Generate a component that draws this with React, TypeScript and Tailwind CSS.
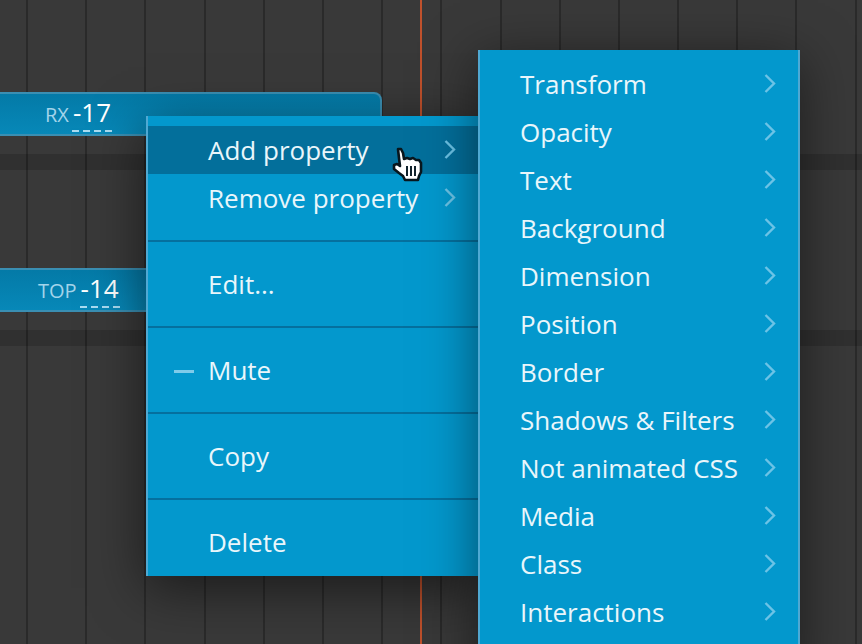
const GRID_COLUMNS = Array.from({ length: 15 })

const SUBMENU = [
  'Transform',
  'Opacity',
  'Text',
  'Background',
  'Dimension',
  'Position',
  'Border',
  'Shadows & Filters',
  'Not animated CSS',
  'Media',
  'Class',
  'Interactions',
]

function Chevron() {
  return (
    <svg width="12" height="19" viewBox="0 0 12 19" fill="none" className="-mt-[2px] shrink-0">
      <path d="M1.5 1 L10 9.5 L1.5 18" stroke="#6cc3e6" strokeWidth="2.4" />
    </svg>
  )
}

function HandCursor() {
  return (
    <svg width="32" height="38" viewBox="0 0 32 38" className="absolute left-[392px] top-[146px]">
      <path
        d="M6 3 L9 3 L11 7 L12 13 L15 12 L18 13 L21 12 L24 14 L27 14 L29 17 L29 26 L27 30 L26 34 L13 34 L11 30 L7 27 L2 23 L2 19 L5 18 L8 20 L7 12 Z"
        fill="#fff"
        stroke="#08161d"
        strokeWidth="2.6"
        strokeLinejoin="round"
      />
      <path d="M15 20 V30 M19 20 V30 M23 20 V30" stroke="#10222c" strokeWidth="2" />
    </svg>
  )
}

function TrackBar({ label, value, inset }: { label: string; value: string; inset: string }) {
  return (
    <div
      className={`flex h-[44px] w-[382px] items-center rounded-tr-[8px] border-y-2 border-r-2 border-[#3a8fb3] bg-gradient-to-b from-[#047aa7] to-[#0788b8] ${inset}`}
    >
      <div className="flex items-baseline gap-[4px] pb-[4px] leading-none text-white">
        <span className="text-[20px] text-[#a3d4ea]">{label}</span>
        <span className="relative text-[26px]">
          {value}
          <span className="absolute -bottom-[7px] -left-[1px] -right-[1px] flex justify-between">
            <i className="h-[2px] w-[7px] bg-[#a9dcf2]" />
            <i className="h-[2px] w-[7px] bg-[#a9dcf2]" />
            <i className="h-[2px] w-[7px] bg-[#a9dcf2]" />
            <i className="h-[2px] w-[7px] bg-[#a9dcf2]" />
          </span>
        </span>
      </div>
    </div>
  )
}

function Row({ children, arrow }: { children: React.ReactNode; arrow?: boolean }) {
  return (
    <div className="flex h-[48px] items-center justify-between pl-[60px] pr-[23px] text-[26px] text-[#e9f6fb]">
      <span>{children}</span>
      {arrow && <Chevron />}
    </div>
  )
}

export default function App() {
  return (
    <div
      className="relative h-[644px] w-[862px] overflow-hidden bg-[#393939]"
      style={{ fontFamily: '"Open Sans", sans-serif' }}
    >
      {/* grid lines */}
      <div className="absolute inset-0 flex pl-[26px]">
        {GRID_COLUMNS.map((_, i) => (
          <div key={i} className="h-full w-[59.2px] shrink-0 border-l-2 border-[#2a2a2a]" />
        ))}
      </div>
      <div className="absolute left-[420px] top-0 h-full w-[2px] bg-[#c0512c]" />

      {/* timeline rows */}
      <div className="relative flex flex-col pt-[92px]">
        <TrackBar label="RX" value="-17" inset="pl-[45px]" />
        <div className="h-[18px]" />
        <div className="h-[16px] bg-black/15" />
        <div className="h-[98px]" />
        <TrackBar label="TOP" value="-14" inset="pl-[38px]" />
        <div className="h-[18px]" />
        <div className="h-[16px] bg-black/15" />
      </div>

      {/* context menu */}
      <div className="absolute left-[146px] top-[116px] w-[333px] border-l-2 border-[#4fa9d3] bg-[#0398cd] py-[10px] shadow-[0_12px_50px_rgba(0,0,0,0.55)]">
        <div className="border-b-2 border-[#05709e] pb-[18px]">
          <div className="bg-[#036f9b]">
            <Row arrow>Add property</Row>
          </div>
          <Row arrow>Remove property</Row>
        </div>
        <div className="border-b-2 border-[#05709e] py-[18px]">
          <Row>Edit...</Row>
        </div>
        <div className="relative border-b-2 border-[#05709e] py-[18px]">
          <div className="absolute left-[26px] top-[42px] h-[3px] w-[20px] bg-[#7fcbea]" />
          <Row>Mute</Row>
        </div>
        <div className="border-b-2 border-[#05709e] py-[18px]">
          <Row>Copy</Row>
        </div>
        <div className="pt-[18px]">
          <Row>Delete</Row>
        </div>
      </div>

      {/* submenu */}
      <div className="absolute left-[478px] top-[50px] w-[322px] border-x-2 border-[#4fa9d3] bg-[#0398cd] pb-[40px] pt-[10px] shadow-[0_10px_50px_rgba(0,0,0,0.5)]">
        {SUBMENU.map((item) => (
          <div key={item} className="[&>div]:pl-[40px] [&>div]:pr-[22px]">
            <Row arrow>{item}</Row>
          </div>
        ))}
      </div>

      <HandCursor />
    </div>
  )
}
